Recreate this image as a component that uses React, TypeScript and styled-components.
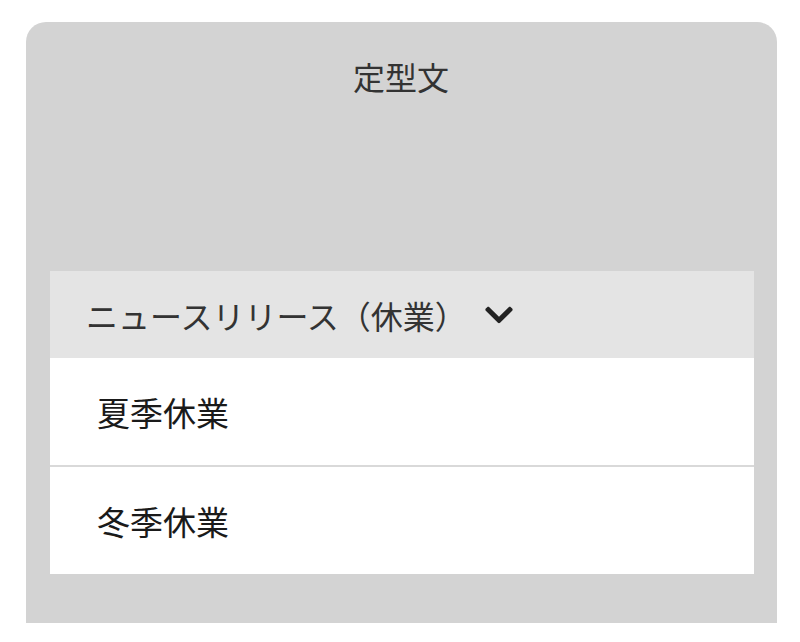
import React from 'react'
import styled, { createGlobalStyle } from 'styled-components'
import { FaChevronDown } from 'react-icons/fa'

const GlobalStyle = createGlobalStyle`
  body {
    margin: 0;
    background: #ffffff;
    font-family: "Noto Sans CJK JP", "Noto Sans", sans-serif;
  }
`

const items = ['夏季休業', '冬季休業']

export default function App() {
  return (
    <>
      <GlobalStyle />
      <Page>
        <Card>
          <Title>定型文</Title>
          <List>
            <CategoryHeader>
              <CategoryName>ニュースリリース（休業）</CategoryName>
              <FaChevronDown size={32} />
            </CategoryHeader>
            {items.map((item, i) => (
              <Item key={item} divided={i > 0}>
                {item}
              </Item>
            ))}
          </List>
        </Card>
      </Page>
    </>
  )
}

const Page = styled.div`
  padding: 22px 23px 20px 26px;
`

const Card = styled.div`
  background-color: #d3d3d3;
  border-radius: 20px 20px 0 0;
  padding: 34px 23px 49px 24px;
  display: flex;
  flex-direction: column;
`

const Title = styled.h1`
  margin: 0 0 175px;
  padding-right: 2px;
  font-size: 32px;
  font-weight: 400;
  line-height: 40px;
  text-align: center;
  color: #333333;
`

const List = styled.div`
  display: flex;
  flex-direction: column;
  background-color: #ffffff;
`

const CategoryHeader = styled.div`
  height: 87px;
  display: flex;
  align-items: center;
  gap: 16px;
  padding-left: 36px;
  background-color: #e4e4e4;
  color: #333333;

  svg {
    color: #222222;
  }
`

const CategoryName = styled.span`
  font-size: 32px;
  line-height: 40px;
`

const Item = styled.div<{ divided?: boolean }>`
  height: 107px;
  display: flex;
  align-items: center;
  padding-left: 47px;
  font-size: 33px;
  color: #1a1a1a;
  border-top: ${({ divided }) => (divided ? '2px solid #d9d9d9' : 'none')};
`
